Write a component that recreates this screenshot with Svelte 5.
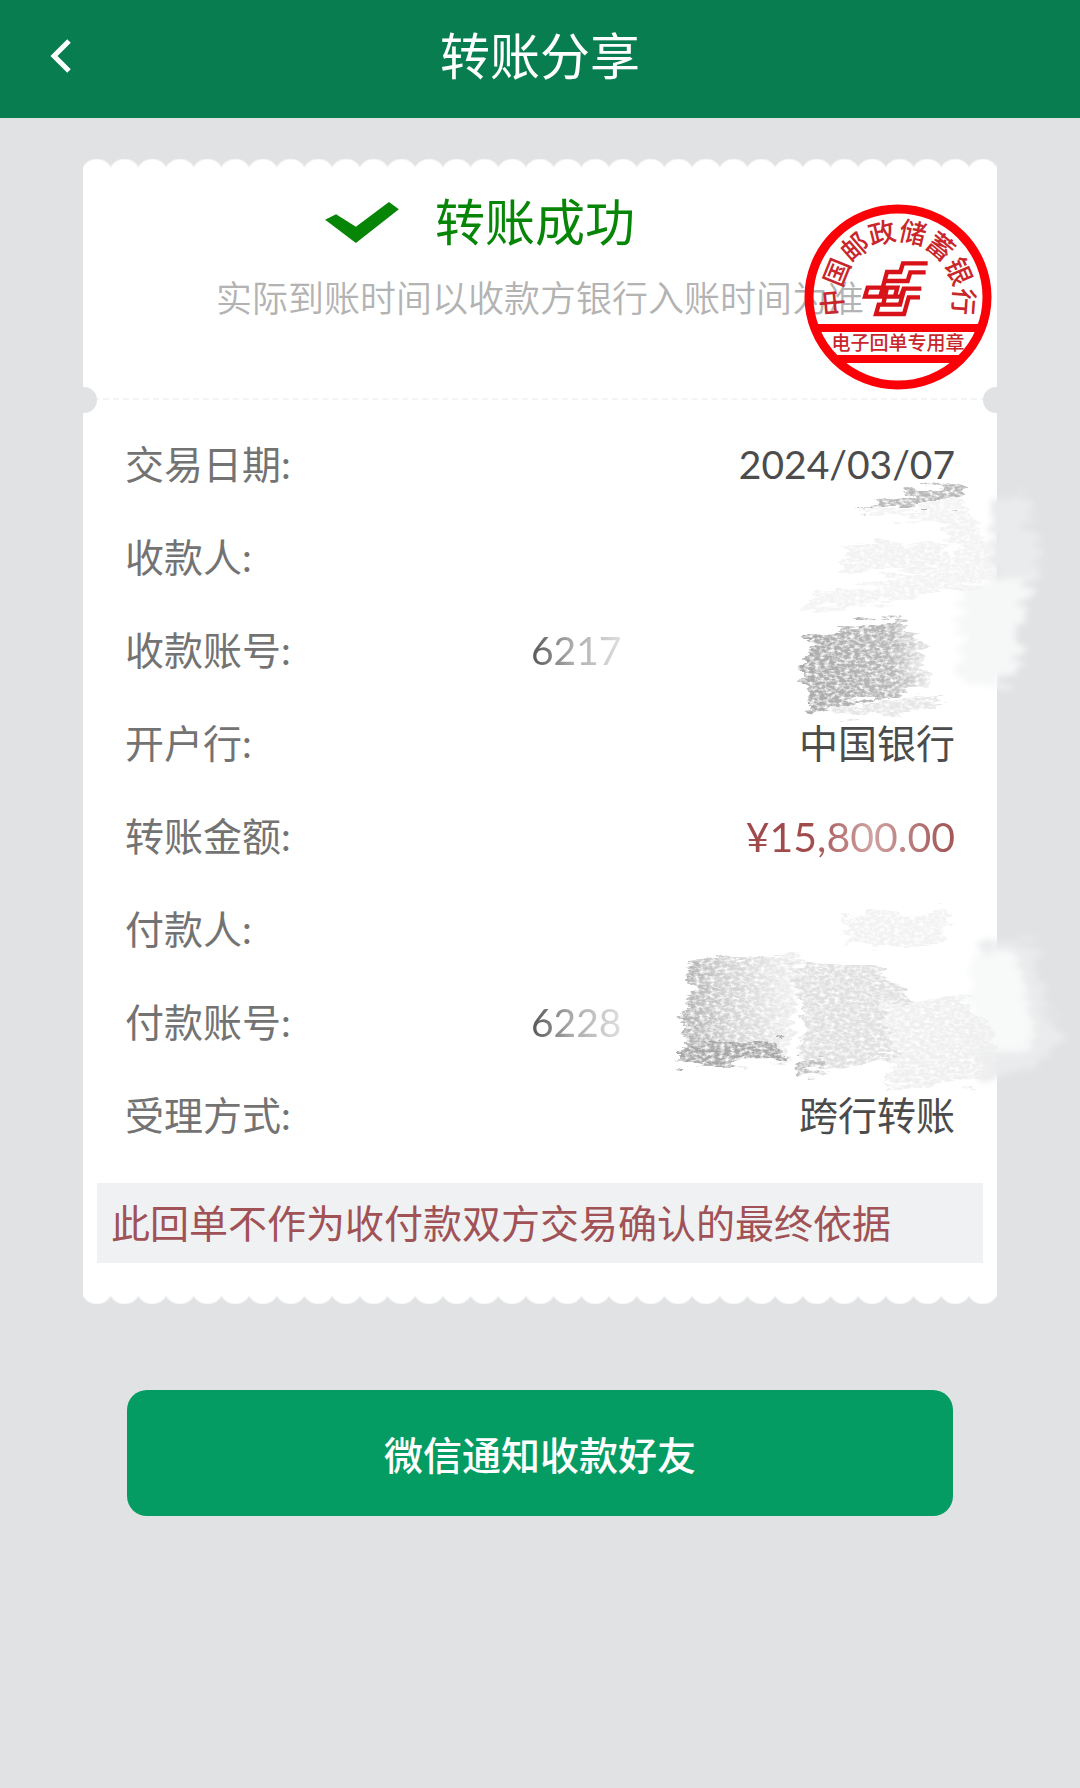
<script lang="ts">
  type Row = { label: string; value: string; tone?: 'amount' | 'faded' };

  const rows: Row[] = [
    { label: '交易日期', value: '2024/03/07' },
    { label: '收款人', value: '' },
    { label: '收款账号', value: '6217', tone: 'faded' },
    { label: '开户行', value: '中国银行' },
    { label: '转账金额', value: '¥15,800.00', tone: 'amount' },
    { label: '付款人', value: '' },
    { label: '付款账号', value: '6228', tone: 'faded' },
    { label: '受理方式', value: '跨行转账' },
  ];

  // Bank name set round the upper half of the seal.
  const sealName = [...'中国邮政储蓄银行'];
  const sealAngle = (i: number) => -95 + i * 27;
</script>

<header>
  <button class="back" type="button" aria-label="返回">
    <svg viewBox="0 0 24 34" aria-hidden="true">
      <path d="M21 2 6 17l15 15" />
    </svg>
  </button>
  <h1>转账分享</h1>
</header>

<main>
  <article class="receipt">
    <section class="status">
      <h2>
        <svg class="tick" viewBox="75 58 223 124" aria-hidden="true">
          <path d="M75 112 108 95 168 133 268 58 298 80 168 182z" />
        </svg>
        转账成功
      </h2>
      <p>实际到账时间以收款方银行入账时间为准</p>

      <svg class="seal" viewBox="0 0 190 188" role="img" aria-label="电子回单专用章">
        <ellipse cx="95" cy="95" rx="89" ry="88" />
        <path class="band" d="M12 126H178M34 157H156" />
        <g class="ring">
          {#each sealName as char, i}
            <text transform={`translate(95 95) rotate(${sealAngle(i)})`} y="-56">{char}</text>
          {/each}
        </g>
        <text class="purpose" x="95" y="148">电子回单专用章</text>
        <g transform="translate(52 50) scale(.3333)">
          <path
            class="emblem"
            d="M218 34H144L136 60H96L76 134M212 61H166L158 87H90M199 110H146L137 134H30L38 107H127L120 134M195 136H161L147 186H63L71 158H135L148 110M96 107L84 160"
          />
        </g>
      </svg>
    </section>

    <section class="details">
      <dl>
        {#each rows as row}
          <div>
            <dt>{row.label}:</dt>
            <dd class={row.tone}>{row.value}</dd>
          </div>
        {/each}
      </dl>

      <svg class="smudges" viewBox="500 450 570 680" aria-hidden="true">
        <defs>
          <filter id="chalk" x="-10%" y="-10%" width="120%" height="120%">
            <feTurbulence type="fractalNoise" baseFrequency=".03 .14" numOctaves="4" seed="4" result="edge" />
            <feDisplacementMap in="SourceGraphic" in2="edge" scale="26" xChannelSelector="R" yChannelSelector="G" result="rough" />
            <feTurbulence type="fractalNoise" baseFrequency=".2 .34" numOctaves="4" seed="9" />
            <feColorMatrix values="0 0 0 0 0  0 0 0 0 0  0 0 0 0 0  0 0 0 2.4 -.45" result="grain" />
            <feComposite in="rough" in2="grain" operator="in" />
            <feGaussianBlur stdDeviation=".6" />
          </filter>
          <filter id="wash" x="-10%" y="-10%" width="120%" height="120%">
            <feTurbulence type="fractalNoise" baseFrequency=".02 .12" numOctaves="3" seed="7" result="edge" />
            <feDisplacementMap in="SourceGraphic" in2="edge" scale="36" xChannelSelector="R" yChannelSelector="G" />
            <feGaussianBlur stdDeviation="3" />
          </filter>
          <linearGradient id="fade">
            <stop offset="0" stop-color="#a9a9a9" />
            <stop offset=".7" stop-color="#b9b9b9" />
            <stop offset="1" stop-color="#efefef" />
          </linearGradient>
          <linearGradient id="fade-light">
            <stop offset="0" stop-color="#acacac" />
            <stop offset=".4" stop-color="#d2d2d2" />
            <stop offset="1" stop-color="#f2f2f2" />
          </linearGradient>
        </defs>

        <g filter="url(#wash)">
          <path fill="#e9ebec" d="M990 497H1034L1030 530 1042 546 1036 578 990 590z" />
          <path fill="#f6f7f7" d="M960 582 1032 574 1022 620 1022 650 1014 680 960 684z" />
          <path fill="#e9ebec" d="M980 946 1020 935 1036 948 1046 1014 1062 1036 1036 1066 980 1080z" />
          <path fill="#f8f9f9" d="M970 954 1018 950 1026 986 1034 1036 1004 1054 970 1060z" />
        </g>
        <g filter="url(#chalk)">
          <path fill="#b9b9b9" d="M856 513 900 496 958 478 966 486 954 500 900 506z" />
          <path fill="#f3f3f3" d="M860 514 960 500 990 540 994 582 930 594 880 604 800 610 810 596 940 570 960 545 930 520z" />
          <path fill="url(#fade)" d="M802 636 900 618 922 640 930 690 860 700 806 714 810 690 800 670 812 650z" />
          <path fill="#e6e6e6" d="M830 706 940 696 936 712 836 716z" />
          <path fill="url(#fade-light)" d="M684 963 720 957 800 957 792 1040 788 1060 676 1064 688 1046 680 1022 694 996z" />
          <path fill="#a8a8a8" d="M678 1052 720 1042 784 1040 786 1058 678 1064z" />
          <path fill="#e0e0e0" d="M790 962 880 968 920 1004 910 1058 850 1064 798 1076 800 1050 806 1022z" />
          <path fill="#c0c0c0" d="M796 1060 816 1058 830 1066 798 1076z" />
          <path fill="#efefef" d="M880 1006 960 996 994 1030 994 1082 888 1088 896 1062z" />
          <path fill="#f2f2f2" d="M842 546 950 540 944 570 842 572zM844 914 948 912 944 944 844 946z" />
        </g>
      </svg>

      <p class="notice">此回单不作为收付款双方交易确认的最终依据</p>
    </section>
  </article>

  <button class="notify" type="button">微信通知收款好友</button>
</main>

<style>
  :global(body) {
    background: #e1e2e4;
    font-family: Lato, 'Noto Sans CJK SC', sans-serif;
  }

  header {
    display: grid;
    grid-template-columns: 120px 1fr 120px;
    align-items: center;
    height: 118px;
    padding-bottom: 6px;
    box-sizing: border-box;
    background: #087d50;
    color: #fff;
  }
  .back {
    display: flex;
    padding: 20px 48px;
    border: 0;
    background: none;
  }
  .back svg {
    width: 24px;
    height: 34px;
    fill: none;
    stroke: #fff;
    stroke-width: 5;
  }
  h1 {
    margin: 0;
    font-size: 50px;
    font-weight: 400;
    line-height: 60px;
    text-align: center;
  }

  main {
    padding: 41px 83px;
  }

  .receipt {
    padding: 9px 0;
    background:
      radial-gradient(circle at 50% 16px, #fff 15px, transparent 17px) 0 0 / 28px 9px round no-repeat,
      radial-gradient(circle at 50% -7px, #fff 15px, transparent 17px) 0 100% / 28px 9px round no-repeat,
      linear-gradient(#fff, #fff) 0 9px / 100% calc(100% - 18px) no-repeat;
  }

  .status {
    position: relative;
    height: 232px;
    padding-top: 24px;
    box-sizing: border-box;
    border-bottom: 2px dashed #f4f4f4;
  }
  /* Punched holes at both ends of the tear line */
  .status::before,
  .status::after {
    content: '';
    position: absolute;
    bottom: -15px;
    width: 14px;
    height: 26px;
    background: #e1e2e4;
  }
  .status::before {
    left: 0;
    border-radius: 0 13px 13px 0;
  }
  .status::after {
    right: 0;
    border-radius: 13px 0 0 13px;
  }
  h2 {
    display: flex;
    align-items: center;
    gap: 36px;
    margin: 0;
    padding-left: 242px;
    color: #068506;
    font-size: 50px;
    font-weight: 400;
    line-height: 60px;
  }
  .tick {
    width: 74px;
    height: 41px;
    fill: #068506;
  }
  .status p {
    margin: 24px 0 0;
    color: #b3b3b3;
    font-size: 36px;
    font-weight: 350;
    line-height: 44px;
    text-align: center;
    white-space: nowrap;
  }
  .seal {
    position: absolute;
    top: 34px;
    right: 4px;
    width: 190px;
    height: 188px;
    fill: #c9262b;
    font-size: 27px;
    font-weight: 500;
    text-anchor: middle;
  }
  .seal ellipse {
    fill: none;
    stroke: #fb0007;
    stroke-width: 9;
  }
  .band {
    stroke: #fb0007;
    stroke-width: 8;
  }
  .purpose {
    font-size: 19px;
  }
  .emblem {
    fill: none;
    stroke: #d81219;
    stroke-width: 13;
  }

  .details {
    position: relative;
    padding: 18px 14px 32px;
  }
  dl {
    margin: 0 28px 21px;
  }
  dl > div {
    display: flex;
    justify-content: space-between;
    height: 93px;
    font-size: 39px;
    line-height: 93px;
  }
  dt {
    color: #737373;
  }
  dd {
    margin: 0;
    color: #4c4c4c;
  }
  .amount {
    background: linear-gradient(90deg, #a04a4c 30%, #cfa3a2 60%, #a55a5a 95%);
    background-clip: text;
    color: transparent;
    font-size: 41px;
  }
  .faded {
    width: 424px;
    background: linear-gradient(90deg, #555, #aaa 40px, #f4f4f4 110px);
    background-clip: text;
    color: transparent;
  }
  .smudges {
    position: absolute;
    top: 50px;
    right: -73px;
    width: 570px;
    height: 680px;
    pointer-events: none;
  }
  .notice {
    margin: 0;
    padding: 0 14px;
    background: #eff1f2;
    color: #a05256;
    font-size: 39px;
    line-height: 80px;
  }

  .notify {
    display: block;
    width: calc(100% - 88px);
    height: 126px;
    margin: 86px 44px 0;
    border: 0;
    border-radius: 20px;
    background: #059c64;
    color: #fff;
    font-family: inherit;
    font-size: 39px;
    font-weight: 500;
  }
</style>
